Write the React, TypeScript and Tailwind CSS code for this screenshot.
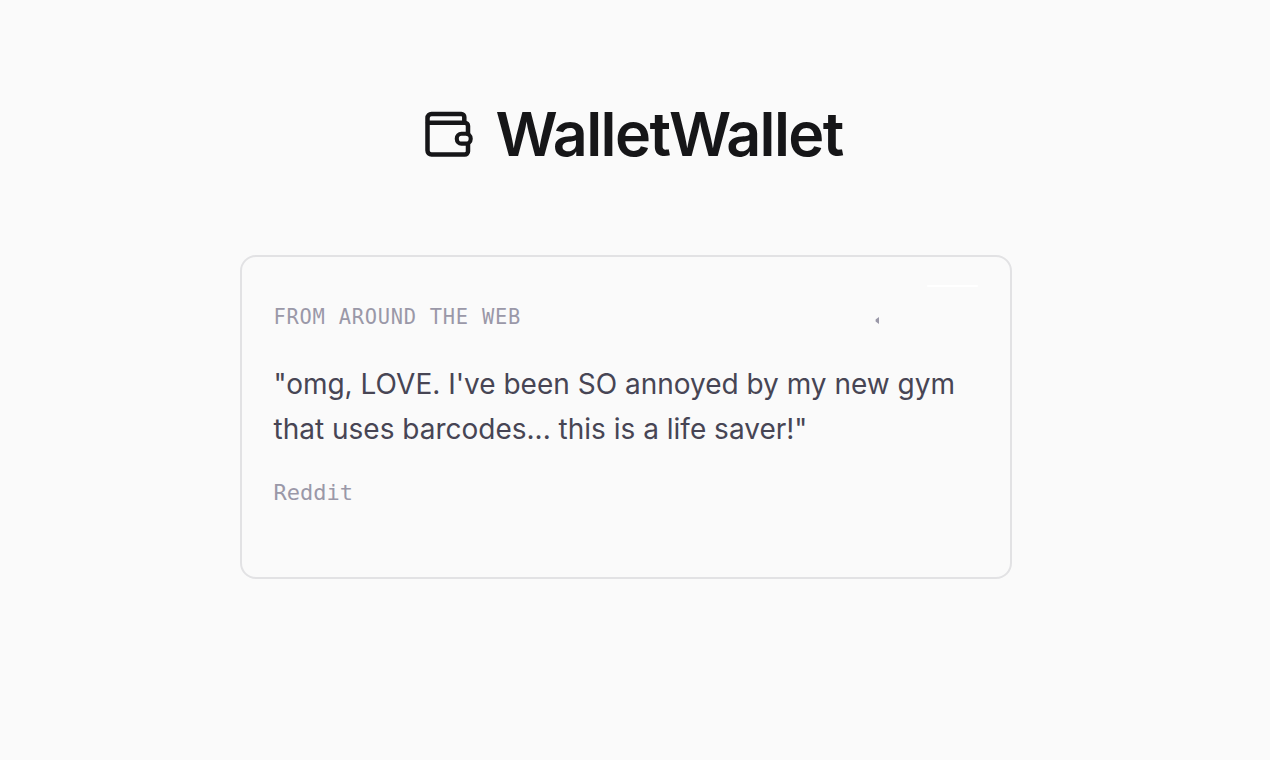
import React from "react";

type QuoteProps = {
  label: string;
  text: string;
  source: string;
};

const WalletIcon: React.FC = () => {
  return (
    <svg
      className="w-[50px] h-[50px] shrink-0"
      viewBox="0 0 50 50"
      fill="none"
      stroke="currentColor"
      strokeWidth="4.5"
      strokeLinecap="round"
      strokeLinejoin="round"
    >
      <path d="M41.3 12.5V7a3 3 0 0 0-3-3H8.5a4 4 0 0 0-4 4v32.6a4 4 0 0 0 4 4h33.2a3.3 3.3 0 0 0 3.3-3.3V34" />
      <path d="M5 12.7h36.7A3.3 3.3 0 0 1 45 16V24" />
      <rect x="33.8" y="23.8" width="13.9" height="9.8" rx="4.6" strokeWidth="4.1" />
    </svg>
  );
};

const Quote: React.FC<QuoteProps> = ({ label, text, source }) => {
  return (
    <section className="relative w-[772px] h-[324px] ml-[240px] mt-[80px] border-2 border-[#e2e2e4] rounded-2xl pl-[31.5px] pt-[46px]">
      <h2 className="font-['DejaVu_Sans_Mono',monospace] text-[20.4px] leading-[28px] tracking-[0.75px] text-[#9a98a8]">
        {label}
      </h2>
      <p className="mt-[31px] w-[700px] font-[Inter,sans-serif] text-[28px] leading-[45px] text-[#474554]">
        {text}
      </p>
      <p className="mt-[25px] font-['DejaVu_Sans_Mono',monospace] text-[22px] leading-[32px] text-[#9a98a8]">
        {source}
      </p>

      {/* prev arrow and the faint edge above it */}
      <svg className="absolute left-[633px] top-[60px] w-[4px] h-[7px]" viewBox="0 0 4 7">
        <path d="M4 0v7L0.6 4.6v-2.2z" fill="#9a98a8" />
      </svg>
      <span className="absolute left-[685px] top-[28px] w-[51px] h-[2px] rounded-full bg-white" />
    </section>
  );
};

const App: React.FC = () => {
  return (
    <main className="w-full h-[760px] bg-[#fafafa] overflow-hidden pt-[95px]">
      <header className="flex items-center gap-[22.5px] h-[80px] pl-[423px] text-[#161618]">
        <WalletIcon />
        <h1 className="font-[Inter,sans-serif] font-semibold text-[61px] leading-[80px] tracking-[-1.6px] -mt-[3px]">
          WalletWallet
        </h1>
      </header>
      <Quote
        label="FROM AROUND THE WEB"
        text={`"omg, LOVE. I've been SO annoyed by my new gym that uses barcodes... this is a life saver!"`}
        source="Reddit"
      />
    </main>
  );
};

export default App;
